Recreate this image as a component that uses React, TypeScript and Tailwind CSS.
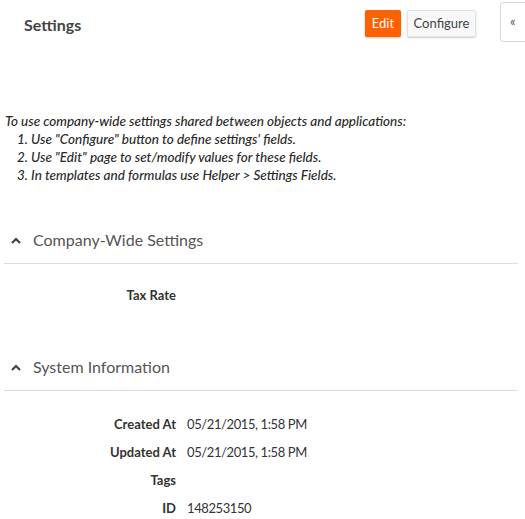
export default function App() {
  const system = [
    { label: "Created At", value: "05/21/2015, 1:58 PM" },
    { label: "Updated At", value: "05/21/2015, 1:58 PM" },
    { label: "Tags", value: "" },
    { label: "ID", value: "148253150" },
  ];

  return (
    <div
      className="h-[519px] w-[525px] overflow-hidden bg-white text-[#333]"
      style={{ fontFamily: "Lato, 'Open Sans', sans-serif" }}
    >
      {/* header */}
      <div className="flex h-[46px] items-start">
        <h1 className="ml-[24px] mt-[14px] text-[16px] leading-[22px] font-bold text-[#444]">
          Settings
        </h1>
        <div className="ml-auto mt-[10px] flex gap-[6px]">
          <button className="h-[27px] w-[36px] rounded-[2px] bg-[#ff6100] text-[13px] text-white shadow-[0_1px_2px_rgba(0,0,0,0.25)]">
            Edit
          </button>
          <button className="h-[27px] w-[69px] rounded-[2px] border border-[#e3e3e3] bg-[#f8f8f8] text-[13px] text-[#444] shadow-[0_1px_2px_rgba(0,0,0,0.2)]">
            Configure
          </button>
        </div>
        <div className="ml-[24px] mt-[2px] flex h-[40px] w-[25px] items-center rounded-l-[4px] border border-r-0 border-[#d8d8d8] pl-[9px] text-[13px] text-[#555]">
          «
        </div>
      </div>

      {/* instructions */}
      <div className="mt-[66px] pl-[5px] text-[13.5px] leading-[18px] font-medium italic text-[#2a2a2a]">
        <p>To use company-wide settings shared between objects and applications:</p>
        <ol className="pl-[12px]">
          <li>1. Use "Configure" button to define settings' fields.</li>
          <li>2. Use "Edit" page to set/modify values for these fields.</li>
          <li>3. In templates and formulas use Helper &gt; Settings Fields.</li>
        </ol>
      </div>

      {/* company-wide settings */}
      <section className="mt-[47px]">
        <SectionHeader title="Company-Wide Settings" />
        <div className="mt-[22px] flex">
          <span className="w-[176px] text-right text-[13px] font-bold text-[#333]">
            Tax Rate
          </span>
        </div>
      </section>

      {/* system information */}
      <section className="mt-[52px]">
        <SectionHeader title="System Information" />
        <div className="mt-[25px] flex flex-col gap-[10px]">
          {system.map((row) => (
            <div key={row.label} className="flex h-[18px] items-center">
              <span className="w-[176px] text-right text-[13px] font-bold text-[#333]">
                {row.label}
              </span>
              <span className="ml-[11px] text-[13px] tracking-[-0.4px] text-[#333]">
                {row.value}
              </span>
            </div>
          ))}
        </div>
      </section>
    </div>
  );
}

function SectionHeader({ title }: { title: string }) {
  return (
    <div className="mx-[4px] flex h-[33px] w-[514px] items-start border-b border-[#dddddd]">
      <svg
        width="10"
        height="7"
        viewBox="0 0 10 7"
        className="ml-[7px] mt-[6px]"
      >
        <path d="M1 6 L5 2 L9 6" fill="none" stroke="#444" strokeWidth="2.2" />
      </svg>
      <span className="ml-[12px] text-[16px] leading-[18px] text-[#555]">{title}</span>
    </div>
  );
}
